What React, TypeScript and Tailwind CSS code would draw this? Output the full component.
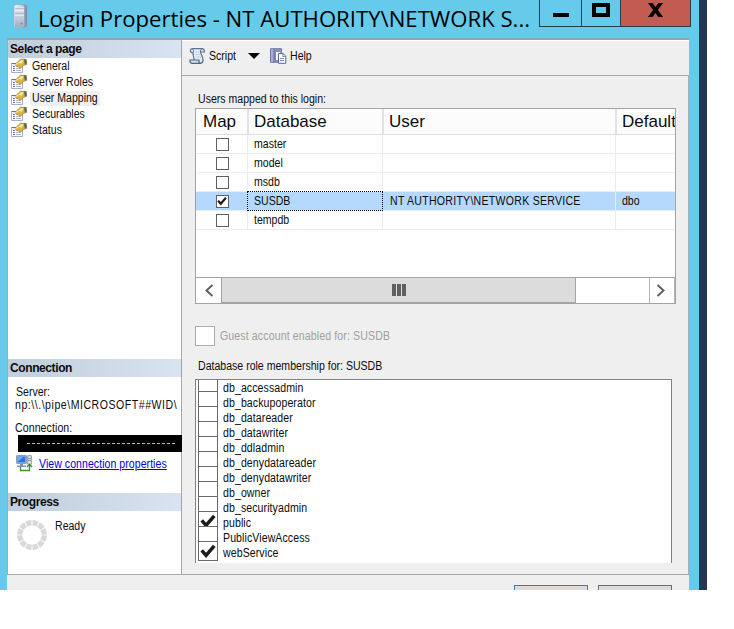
import React from 'react';

const pages = ['General', 'Server Roles', 'User Mapping', 'Securables', 'Status'];

const databases = [
  { name: 'master', user: '', schema: '', mapped: false },
  { name: 'model', user: '', schema: '', mapped: false },
  { name: 'msdb', user: '', schema: '', mapped: false },
  { name: 'SUSDB', user: 'NT AUTHORITY\\NETWORK SERVICE', schema: 'dbo', mapped: true },
  { name: 'tempdb', user: '', schema: '', mapped: false },
];

const roles = [
  { name: 'db_accessadmin', checked: false },
  { name: 'db_backupoperator', checked: false },
  { name: 'db_datareader', checked: false },
  { name: 'db_datawriter', checked: false },
  { name: 'db_ddladmin', checked: false },
  { name: 'db_denydatareader', checked: false },
  { name: 'db_denydatawriter', checked: false },
  { name: 'db_owner', checked: false },
  { name: 'db_securityadmin', checked: false },
  { name: 'public', checked: true },
  { name: 'PublicViewAccess', checked: false },
  { name: 'webService', checked: true },
];

// Narrow dialog font used by all the small labels
const Label = ({ children, className = '' }: { children: React.ReactNode; className?: string }) => (
  <span className={`inline-block origin-left scale-x-[0.88] ${className}`}>{children}</span>
);

const ServerIcon = () => (
  <svg width="15" height="24" viewBox="0 0 15 24" className="shrink-0">
    <defs>
      <linearGradient id="tower" x1="0" x2="1" y1="0" y2="0">
        <stop offset="0" stopColor="#f4f7fa" />
        <stop offset="0.5" stopColor="#ccd5e2" />
        <stop offset="1" stopColor="#76859f" />
      </linearGradient>
      <linearGradient id="panel" x1="0" x2="0" y1="0" y2="1">
        <stop offset="0" stopColor="#e4e9f0" />
        <stop offset="1" stopColor="#a3b1c8" />
      </linearGradient>
    </defs>
    <path d="M1 2 3 .5H12.500L14 2V22L12 23.500H1Z" fill="url(#tower)" stroke="#8fa3bd" strokeWidth="0.5" />
    <path d="M1.500 2.500H11V23H1.500Z" fill="url(#panel)" />
    <path d="M2 5H11M2 10H11" stroke="#8795ab" strokeWidth="0.9" />
    <path d="M2 6H11M2 11H11" stroke="#fff" strokeWidth="1" />
    <path d="M7.500 19.500H9.500" stroke="#6f89aa" strokeWidth="1.500" />
  </svg>
);

const PageIcon = () => (
  <svg width="16" height="16" viewBox="0 0 16 16" className="shrink-0">
    <path d="M.5 5.500H11.500V14.500H.5Z" fill="#fbfcff" stroke="#a7aebd" />
    <path d="M.5 5.500H6" stroke="#6c7690" strokeWidth="1" />
    <path d="M2 8.500H4M2 10.500H4M2 12.500H4" stroke="#5c74ad" strokeWidth="1" />
    <path d="M5 10.500H10M5 12.500H10" stroke="#b3bacb" strokeWidth="1" />
    <path d="M4 6.500 7.500 3 9.500 1.200H13.500L15.500 3V6.500L12 7.500 10.500 9.500 8.500 10 7 8.500 5.500 8.500Z" fill="#dfb445" stroke="#80692f" strokeWidth="0.6" />
    <path d="M7 5 10.200 2.200H12.500L10.500 5.500Z" fill="#fff0a0" />
    <path d="M13 1.200H15.500V6L13.800 6.500Z" fill="#52634b" />
    <path d="M3.500 7.500 7.500 4.500" stroke="#fff" strokeWidth="0.8" />
  </svg>
);

const ScriptIcon = () => (
  <svg width="17" height="16" viewBox="0 0 17 16" className="shrink-0">
    <path d="M3.500.7H13Q15.500.7 15.500 4H11.500L14 11Q14.500 14.500 12 15.300H3Q6 14 5 11L3.800 5Q1.200 4.500 1.400 2.500 1.600.7 3.500.7Z" fill="#e3ebf6" stroke="#60748f" strokeWidth="1.200" />
    <path d="M1 12H10Q9.500 15.300 12 15.300H3Q.5 15 1 12Z" fill="#d3deed" stroke="#4e6380" strokeWidth="1.200" />
    <path d="M3.500 1Q5.500 2 4 5M13 1Q11 1.500 11.500 4" fill="none" stroke="#60748f" />
    <path d="M6 4H10M6.500 6.500H11M7 9H12" stroke="#c3cfe2" />
  </svg>
);

const HelpIcon = () => (
  <svg width="17" height="16" viewBox="0 0 17 16" className="shrink-0">
    <path d="M.5.7H11.500V14.300H.5Z" fill="#8e92c0" stroke="#7477aa" />
    <path d="M1 1H3.500V14H1Z" fill="#a9acd4" />
    <path d="M4 1V14" stroke="#6b6fa3" />
    <path d="M5.500 3.500H10L12 5.500V12.500H5.500Z" fill="#f5f8fc" stroke="#7b8aa6" />
    <path d="M8.500 5.500H13L15.800 8.200V15.300H8.500Z" fill="#fff" stroke="#526887" />
    <path d="M12.800 5.500V8.500H15.800M10 10.500H14M10 12.500H14" fill="none" stroke="#7d90ad" />
  </svg>
);

const ConnectionIcon = () => (
  <svg width="17" height="17" viewBox="0 0 17 17" className="shrink-0">
    <path d="M.7.7H10.300V8.300H.7Z" fill="#d9e1ee" stroke="#7787a3" />
    <path d="M1.500 1.500H9.500V7.500H1.500Z" fill="#2877df" />
    <path d="M2 2H7L3 6H2Z" fill="#69abf5" />
    <path d="M4 9H7V10.500H10V12H1V10.500H4Z" fill="#8391aa" />
    <path d="M11.700.7H15.300V9.300H11.700Z" fill="#e5eaf1" stroke="#8b96a9" />
    <path d="M12 3.500H15M12 5.500H15" stroke="#8b96a9" />
    <path d="M4.500 12V15.500H13.500V9.500M11 12 13.500 9.300 16 12" fill="none" stroke="#37961f" strokeWidth="1.300" />
  </svg>
);

const CheckMark = ({ size }: { size: number }) => (
  <svg width={size} height={size} viewBox="0 0 14 14">
    <path d="M1.500 6.500 5.300 10.800 12.500 2.500" fill="none" stroke="#1c1c1c" strokeWidth="3.100" />
  </svg>
);

const Spinner = () => (
  <svg width="32" height="32" viewBox="0 0 32 32" className="shrink-0">
    <circle cx="16" cy="16" r="12.300" fill="none" stroke="#d9d9d9" strokeWidth="5.400" pathLength="120" strokeDasharray="8.500 1.500" strokeDashoffset="-0.75" />
  </svg>
);

const SectionHeader = ({ title }: { title: string }) => (
  <div className="flex h-[18px] shrink-0 items-center bg-linear-to-r from-[#c0cddb] to-[#d8e4f2] pl-[2px] text-[12px] font-bold tracking-[-0.4px]">
    {title}
  </div>
);

const Sidebar = () => (
  <div className="flex w-[175px] shrink-0 flex-col border-x border-[#a5a7aa] bg-white">
    <SectionHeader title="Select a page" />
    <div className="h-[301px]">
      {pages.map((page) => (
        <div key={page} className="flex h-4 items-center pl-[3px]">
          <PageIcon />
          {page === 'User Mapping' ? (
            <span className="ml-[3px] h-[15px] w-[70px] bg-[#efefef] pl-[2px] leading-[15px]">
              <Label>{page}</Label>
            </span>
          ) : (
            <Label className="ml-[5px]">{page}</Label>
          )}
        </div>
      ))}
    </div>

    <SectionHeader title="Connection" />
    <div className="h-[116px] pt-[9px]">
      <div className="pl-2 leading-[13px]">
        <Label>Server:</Label>
      </div>
      <div className="overflow-hidden pl-[7px] leading-[13px]">
        <Label className="tracking-[0.6px]">np:\\.\pipe\MICROSOFT##WID\</Label>
      </div>
      <div className="mt-[10px] pl-[7px] leading-[13px]">
        <Label className="tracking-[0.1px]">Connection:</Label>
      </div>
      <div className="-mr-px ml-[10px] h-[17px] bg-black pt-2 pl-[9px]">
        <div className="w-[148px] border-t border-dashed border-[#bcbcbc]"></div>
      </div>
      <div className="mt-[3px] flex h-[17px] items-center pl-2">
        <ConnectionIcon />
        <a className="ml-[6px] text-[#0000e8]">
          <Label className="tracking-[0.05px] underline">View connection properties</Label>
        </a>
      </div>
    </div>

    <SectionHeader title="Progress" />
    <div className="flex pt-2 pl-2">
      <Spinner />
      <Label className="ml-[7px] leading-[14px]">Ready</Label>
    </div>
  </div>
);

const MappingGrid = () => (
  <div className="flex h-[196px] w-[481px] flex-col overflow-hidden border border-[#a2a4a7] bg-white">
    <div className="flex h-[26px] shrink-0 border-b border-[#dedede] bg-[#fcfcfc] text-[17px] leading-[25px]">
      <div className="w-[53px] shrink-0 border-r-2 border-[#e2e2e2] pl-[7px]">Map</div>
      <div className="w-[135px] shrink-0 border-r-2 border-[#e2e2e2] pl-[5px]">Database</div>
      <div className="w-[233px] shrink-0 border-r-2 border-[#e2e2e2] pl-[5px]">User</div>
      <div className="pl-[5px]">Default</div>
    </div>
    {databases.map((db) => (
      <div
        key={db.name}
        className={`flex h-[19px] shrink-0 border-b border-[#ececec] leading-[19px] ${
          db.mapped ? 'bg-[#b5d8fd]' : ''
        }`}
      >
        <div className="flex w-[52px] shrink-0 items-center justify-center border-r border-[#ececec] pl-px">
          <div className="flex size-[13px] items-center justify-center border border-[#606060] bg-white">
            {db.mapped && <CheckMark size={10} />}
          </div>
        </div>
        {db.mapped ? (
          <div className="-mt-px -ml-px h-5 w-[136px] shrink-0 border border-dotted border-black pl-[6px]">
            <Label>{db.name}</Label>
          </div>
        ) : (
          <div className="w-[135px] shrink-0 border-r border-[#ececec] pl-[6px]">
            <Label>{db.name}</Label>
          </div>
        )}
        <div className="w-[233px] shrink-0 border-r border-[#ececec] pl-[7px]">
          <Label className="tracking-[0.3px]">{db.user}</Label>
        </div>
        <div className="pl-[6px]">
          <Label>{db.schema}</Label>
        </div>
      </div>
    ))}
    <div className="mt-auto flex h-[26px] shrink-0 border-t border-[#a2a4a7]">
      <div className="flex w-[26px] items-center justify-center border-r border-[#a2a4a7]">
        <svg width="10" height="13" viewBox="0 0 10 13">
          <path d="M8.500 1 2.500 6.500 8.500 12" fill="none" stroke="#606060" strokeWidth="2" />
        </svg>
      </div>
      <div className="flex w-[354px] items-center justify-center gap-px border-r border-b border-[#a2a4a7] bg-[#dcdcdc]">
        <div className="h-3 w-1 bg-[#606060]"></div>
        <div className="h-3 w-1 bg-[#606060]"></div>
        <div className="h-3 w-1 bg-[#606060]"></div>
      </div>
      <div className="ml-auto flex w-[26px] items-center justify-center border-x border-[#b4b5b7] pr-[2px]">
        <svg width="10" height="13" viewBox="0 0 10 13">
          <path d="M1.500 1 7.500 6.500 1.500 12" fill="none" stroke="#606060" strokeWidth="2" />
        </svg>
      </div>
    </div>
  </div>
);

const RoleList = () => (
  <div className="h-[184px] w-[477px] overflow-hidden border border-b-0 border-[#828282] bg-white pt-px pl-[2px]">
    {roles.map((role) => (
      <div key={role.name} className="flex h-[15px]">
        <div className="relative -mt-[5px] flex size-5 shrink-0 items-center justify-center border border-[#6b6b6b] bg-white">
          {role.checked && <CheckMark size={16} />}
        </div>
        <Label className="ml-[5px] leading-[15px] tracking-[0.1px]">{role.name}</Label>
      </div>
    ))}
  </div>
);

const App: React.FC = () => {
  return (
    <div className="h-[629px] w-[734px] overflow-hidden bg-white font-['Liberation_Sans',sans-serif] text-[12px] whitespace-nowrap text-[#0c0c0c]">
      <div className="flex h-[590px] w-[707px] flex-col overflow-hidden border-r-8 border-[#263655] bg-[#66cbea]">
        {/* Title bar */}
        <div className="flex h-[38px] shrink-0 pl-[13px]">
          <div className="pt-1">
            <ServerIcon />
          </div>
          <div className="ml-[10px] w-[501px] font-['Open_Sans',sans-serif] text-[22.15px] leading-[36px] text-black">
            Login Properties - NT AUTHORITY\NETWORK S...
          </div>
          <div className="flex h-[27px] w-[152px] border border-t-0 border-[#263f4c]">
            <div className="flex w-[42px] justify-center border-r border-[#263f4c] pt-[13px]">
              <div className="h-1 w-4 bg-black"></div>
            </div>
            <div className="flex w-[39px] justify-center border-r border-[#263f4c] pt-[3px]">
              <div className="h-[14px] w-[18px] border-4 border-black"></div>
            </div>
            <div className="flex flex-1 justify-center bg-[#c25b50] pt-[3px]">
              <svg width="17" height="14" viewBox="0 0 18 14" preserveAspectRatio="none">
                <path d="M1 0H6L9 4 12 0H17L11.500 7 17 14H12L9 10 6 14H1L6.500 7Z" fill="#000" />
              </svg>
            </div>
          </div>
        </div>

        {/* Dialog body */}
        <div className="ml-[7px] flex h-[537px] w-[682px] shrink-0 flex-col border-b border-[#a5a7aa] bg-[#efefef]">
          <div className="h-[2px] shrink-0 bg-[#8ba9b3]"></div>
          <div className="flex flex-1">
            <Sidebar />
            <div className="flex-1">
              <div className="flex h-9 items-center border-t border-b border-t-white border-b-[#a5a7aa] pb-1 pl-[7px]">
                <ScriptIcon />
                <Label className="ml-[3px]">Script</Label>
                <svg width="12" height="6" viewBox="0 0 12 6" className="ml-[8px]">
                  <path d="M0 0H12L6 6Z" fill="#000" />
                </svg>
                <span className="ml-[10px]">
                  <HelpIcon />
                </span>
                <Label className="ml-[3px]">Help</Label>
              </div>
              <div className="h-[498px] border-r border-[#9fb3bb] pt-[16px] pl-[13px]">
                <div className="mb-[2px] pl-[3px] leading-[14px]">
                  <Label>Users mapped to this login:</Label>
                </div>
                <MappingGrid />
                <div className="mt-[22px] flex h-5 items-center text-[#a0a0a0]">
                  <div className="size-5 border border-[#adadad] bg-white"></div>
                  <Label className="ml-[5px] tracking-[0.14px]">Guest account enabled for: SUSDB</Label>
                </div>
                <div className="mt-[13px] mb-[6px] pl-[3px] leading-[14px]">
                  <Label>Database role membership for: SUSDB</Label>
                </div>
                <RoleList />
              </div>
            </div>
          </div>
        </div>

        {/* Dialog buttons, cut off by the bottom edge */}
        <div className="ml-[7px] flex w-[682px] flex-1 justify-end gap-[10px] bg-[#efefef] pt-[10px] pr-[17px]">
          <div className="w-[74px] border border-b-0 border-[#447ba5] bg-[#dcdcdc]"></div>
          <div className="w-[74px] border border-b-0 border-[#6e6e6e] bg-[#dcdcdc]"></div>
        </div>
      </div>
    </div>
  );
};

export default App;
